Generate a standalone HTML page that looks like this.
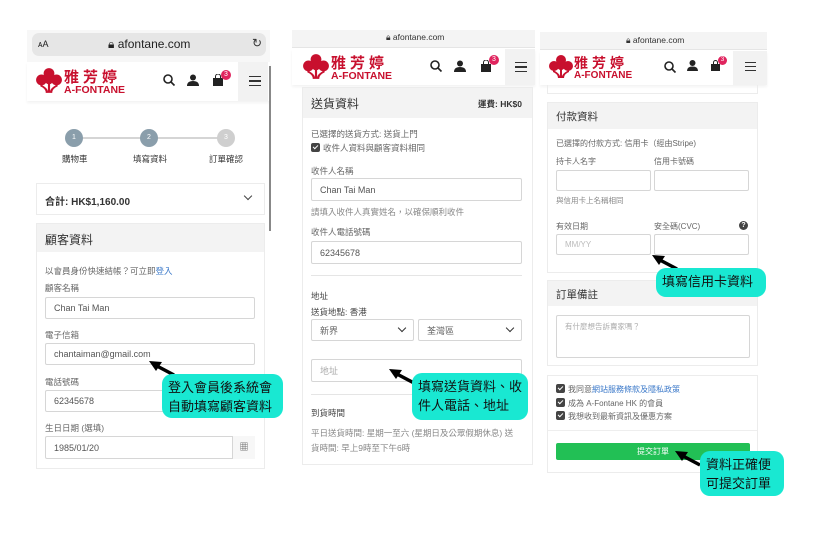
<!DOCTYPE html>
<html><head><meta charset="utf-8"><style>
*{margin:0;padding:0;box-sizing:border-box}
body{width:822px;height:554px;background:#fff;position:relative;overflow:hidden;font-family:"Liberation Sans","Noto Sans CJK TC",sans-serif;color:#555}
.a{position:absolute;white-space:nowrap}
.inp{position:absolute;border:1px solid #d6d6d6;background:#fff;border-radius:2px;font-size:9px;color:#555;padding-left:8px;display:flex;align-items:center}
.lbl{position:absolute;font-size:8.5px;color:#666;white-space:nowrap}
.gh{position:absolute;background:#f3f3f3}
.card{position:absolute;border:1px solid #ececec;background:#fff}
.call{position:absolute;background:#19e8d2;border-radius:10px;color:#111;font-size:13px;line-height:19px;padding:4px 6px;white-space:nowrap}
.cb{display:inline-block;width:9px;height:9px;background:#444;border-radius:2px;vertical-align:-1px;margin-right:3px;position:relative}
.cb:after{content:"";position:absolute;left:3px;top:1px;width:2px;height:4px;border:solid #fff;border-width:0 1px 1px 0;transform:rotate(45deg)}
</style></head><body>

<svg width="0" height="0" style="position:absolute"><defs>
<g id="flower" fill="#c8102e"><circle cx="12" cy="6" r="5"/><circle cx="5" cy="12" r="5"/><circle cx="19" cy="12" r="5"/><circle cx="12" cy="12" r="4"/><path d="M11 14h2v10h-2z"/><path d="M4 16 Q12 20 11 24 L9 24 Q9 20 4 18Z"/><path d="M20 16 Q12 20 13 24 L15 24 Q15 20 20 18Z"/></g>
<g id="srch" fill="none" stroke="#222" stroke-width="1.6"><circle cx="5" cy="5" r="4"/><path d="M8 8 L11.5 11.5"/></g>
<g id="arr"><path d="M29 19 L11 9.5" stroke="#000" stroke-width="3.5"/><path d="M4 5 L17 6 L11 15Z" fill="#000"/></g>
</defs></svg>

<!-- ========== PANEL 1 ========== -->
<div class="a" style="left:27px;top:30px;width:243px;height:32px;background:#f7f7f7"></div>
<div class="a" style="left:32px;top:33px;width:234px;height:23px;background:#e6e6e6;border-radius:7px"></div>
<div class="a" style="left:38px;top:39px;font-size:9px;color:#222">ᴀA</div>
<div class="a" style="left:108px;top:37px;font-size:12px;color:#222">&#128274;&#xFE0E; afontane.com</div>
<div class="a" style="left:252px;top:36px;font-size:12px;color:#333">↻</div>
<div class="a" style="left:27px;top:62px;width:243px;height:39px;background:#fff;box-shadow:0 2px 3px rgba(0,0,0,.05)"></div>
<div class="a" style="left:238px;top:62px;width:30px;height:39px;background:#f2f2f2"></div>
<svg class="a" style="left:36px;top:67px" width="26" height="28" viewBox="0 0 24 26"><use href="#flower"/></svg>
<div class="a" style="left:64px;top:66px;font-size:15px;font-weight:bold;color:#c8102e;letter-spacing:4px">雅芳婷</div>
<div class="a" style="left:64px;top:84px;font-size:10.5px;font-weight:bold;color:#c8102e">A-FONTANE</div>
<svg class="a" style="left:163px;top:74px" width="13" height="13"><use href="#srch"/></svg>
<svg class="a" style="left:187px;top:74px" width="12" height="12"><circle cx="6" cy="3.5" r="3" fill="#222"/><path d="M0 12 Q0 7 6 7 Q12 7 12 12Z" fill="#222"/></svg>
<svg class="a" style="left:212px;top:74px" width="12" height="12"><path d="M1 4h10v8H1z" fill="#222"/><path d="M3.5 4V2.5a2.5 2.5 0 0 1 5 0V4" stroke="#222" fill="none"/></svg>
<div class="a" style="left:221px;top:70px;width:10px;height:10px;border-radius:50%;background:#e0245e;color:#fff;font-size:7px;text-align:center;line-height:10px">3</div>
<div class="a" style="left:249px;top:76px;width:12px;height:10px;border-top:1.5px solid #333;border-bottom:1.5px solid #333"></div>
<div class="a" style="left:249px;top:80px;width:12px;height:1.5px;background:#333"></div>
<div class="a" style="left:269px;top:66px;width:2px;height:165px;background:#888"></div>
<div class="a" style="left:74px;top:137px;width:152px;height:2px;background:#d5d5d5"></div>
<div class="a" style="left:65px;top:129px;width:18px;height:18px;border-radius:50%;background:#8a9eab;color:#fff;font-size:7px;text-align:center;line-height:18px">1</div>
<div class="a" style="left:140px;top:129px;width:18px;height:18px;border-radius:50%;background:#8a9eab;color:#fff;font-size:7px;text-align:center;line-height:18px">2</div>
<div class="a" style="left:217px;top:129px;width:18px;height:18px;border-radius:50%;background:#cfcfcf;color:#fff;font-size:7px;text-align:center;line-height:18px">3</div>
<div class="a" style="left:62px;top:153px;font-size:8.5px;color:#333">購物車</div>
<div class="a" style="left:133px;top:153px;font-size:8.5px;color:#333">填寫資料</div>
<div class="a" style="left:209px;top:153px;font-size:8.5px;color:#333">訂單確認</div>
<div class="card" style="left:36px;top:183px;width:229px;height:32px"></div>
<div class="a" style="left:45px;top:193px;font-size:10px;font-weight:bold;color:#333">合計: HK$1,160.00</div>
<div class="a" style="left:245px;top:193px;width:6px;height:6px;border-right:1.3px solid #444;border-bottom:1.3px solid #444;transform:rotate(45deg)"></div>
<div class="card" style="left:36px;top:223px;width:229px;height:246px"></div>
<div class="gh" style="left:37px;top:224px;width:227px;height:28px"></div>
<div class="a" style="left:45px;top:231px;font-size:12px;color:#333">顧客資料</div>
<div class="lbl" style="left:45px;top:265px">以會員身份快速結帳？可立即<span style="color:#3a78c9">登入</span></div>
<div class="lbl" style="left:45px;top:282px">顧客名稱</div>
<div class="inp" style="left:45px;top:297px;width:210px;height:22px">Chan Tai Man</div>
<div class="lbl" style="left:45px;top:329px">電子信箱</div>
<div class="inp" style="left:45px;top:343px;width:210px;height:22px">chantaiman@gmail.com</div>
<div class="lbl" style="left:45px;top:376px">電話號碼</div>
<div class="inp" style="left:45px;top:390px;width:210px;height:22px">62345678</div>
<div class="lbl" style="left:45px;top:422px">生日日期 (選填)</div>
<div class="inp" style="left:45px;top:436px;width:210px;height:23px">1985/01/20</div>
<div class="a" style="left:232px;top:436px;width:23px;height:23px;border-left:1px solid #d6d6d6;background:#f7f7f7;font-size:9px;text-align:center;line-height:23px;color:#555">&#9638;</div>
<svg class="a" style="left:145px;top:356px" width="32" height="22"><use href="#arr"/></svg>
<div class="call" style="left:162px;top:374px;width:121px;height:44px">登入會員後系統會<br>自動填寫顧客資料</div>

<!-- ========== PANEL 2 ========== -->
<div class="a" style="left:292px;top:30px;width:243px;height:18px;background:#f4f4f4;border-bottom:1px solid #e5e5e5"></div>
<div class="a" style="left:386px;top:32px;font-size:8.5px;color:#333">&#128274;&#xFE0E; afontane.com</div>
<div class="a" style="left:292px;top:49px;width:243px;height:36px;background:#fff;box-shadow:0 2px 3px rgba(0,0,0,.05)"></div>
<div class="a" style="left:505px;top:49px;width:30px;height:36px;background:#f2f2f2"></div>
<svg class="a" style="left:303px;top:53px" width="26" height="28" viewBox="0 0 24 26"><use href="#flower"/></svg>
<div class="a" style="left:331px;top:52px;font-size:15px;font-weight:bold;color:#c8102e;letter-spacing:4px">雅芳婷</div>
<div class="a" style="left:331px;top:70px;font-size:10.5px;font-weight:bold;color:#c8102e">A-FONTANE</div>
<svg class="a" style="left:430px;top:60px" width="13" height="13"><use href="#srch"/></svg>
<svg class="a" style="left:454px;top:60px" width="12" height="12"><circle cx="6" cy="3.5" r="3" fill="#222"/><path d="M0 12 Q0 7 6 7 Q12 7 12 12Z" fill="#222"/></svg>
<svg class="a" style="left:480px;top:60px" width="12" height="12"><path d="M1 4h10v8H1z" fill="#222"/><path d="M3.5 4V2.5a2.5 2.5 0 0 1 5 0V4" stroke="#222" fill="none"/></svg>
<div class="a" style="left:489px;top:55px;width:10px;height:10px;border-radius:50%;background:#e0245e;color:#fff;font-size:7px;text-align:center;line-height:10px">3</div>
<div class="a" style="left:515px;top:62px;width:12px;height:10px;border-top:1.5px solid #333;border-bottom:1.5px solid #333"></div>
<div class="a" style="left:515px;top:66px;width:12px;height:1.5px;background:#333"></div>
<div class="card" style="left:302px;top:87px;width:231px;height:378px"></div>
<div class="gh" style="left:303px;top:88px;width:229px;height:30px"></div>
<div class="a" style="left:311px;top:95px;font-size:12px;color:#333">送貨資料</div>
<div class="a" style="left:478px;top:98px;font-size:8.5px;font-weight:bold;color:#333">運費: HK$0</div>
<div class="lbl" style="left:311px;top:128px">已選擇的送貨方式: 送貨上門</div>
<div class="lbl" style="left:311px;top:142px"><span class="cb"></span>收件人資料與顧客資料相同</div>
<div class="lbl" style="left:311px;top:165px">收件人名稱</div>
<div class="inp" style="left:311px;top:178px;width:211px;height:23px">Chan Tai Man</div>
<div class="lbl" style="left:311px;top:206px;color:#888">請填入收件人真實姓名，以確保順利收件</div>
<div class="lbl" style="left:311px;top:226px">收件人電話號碼</div>
<div class="inp" style="left:311px;top:241px;width:211px;height:23px">62345678</div>
<div class="a" style="left:311px;top:275px;width:211px;height:1px;background:#e5e5e5"></div>
<div class="lbl" style="left:311px;top:290px;color:#444">地址</div>
<div class="lbl" style="left:311px;top:306px;color:#444">送貨地點: 香港</div>
<div class="inp" style="left:311px;top:319px;width:103px;height:22px;color:#666">新界</div>
<div class="a" style="left:399px;top:325px;width:6px;height:6px;border-right:1.5px solid #333;border-bottom:1.5px solid #333;transform:rotate(45deg)"></div>
<div class="inp" style="left:418px;top:319px;width:104px;height:22px;color:#666">荃灣區</div>
<div class="a" style="left:507px;top:325px;width:6px;height:6px;border-right:1.5px solid #333;border-bottom:1.5px solid #333;transform:rotate(45deg)"></div>
<div class="inp" style="left:311px;top:359px;width:211px;height:23px;color:#aaa">地址</div>
<div class="a" style="left:311px;top:394px;width:211px;height:1px;background:#e5e5e5"></div>
<div class="lbl" style="left:311px;top:407px;color:#444">到貨時間</div>
<div class="lbl" style="left:311px;top:427px;color:#888">平日送貨時間: 星期一至六 (星期日及公眾假期休息) 送</div>
<div class="lbl" style="left:311px;top:442px;color:#888">貨時間: 早上9時至下午6時</div>
<svg class="a" style="left:385px;top:364px" width="32" height="22"><use href="#arr"/></svg>
<div class="call" style="left:412px;top:373px;width:116px;height:47px">填寫送貨資料、收<br>件人電話、地址</div>

<!-- ========== PANEL 3 ========== -->
<div class="a" style="left:540px;top:32px;width:227px;height:18px;background:#f4f4f4;border-bottom:1px solid #e5e5e5"></div>
<div class="a" style="left:626px;top:35px;font-size:8.5px;color:#333">&#128274;&#xFE0E; afontane.com</div>
<div class="a" style="left:540px;top:51px;width:227px;height:34px;background:#fff;box-shadow:0 2px 3px rgba(0,0,0,.05)"></div>
<div class="a" style="left:733px;top:51px;width:34px;height:34px;background:#f2f2f2"></div>
<svg class="a" style="left:549px;top:54px" width="24" height="26" viewBox="0 0 24 26"><use href="#flower"/></svg>
<div class="a" style="left:574px;top:53px;font-size:14px;font-weight:bold;color:#c8102e;letter-spacing:4px">雅芳婷</div>
<div class="a" style="left:574px;top:70px;font-size:10px;font-weight:bold;color:#c8102e">A-FONTANE</div>
<svg class="a" style="left:664px;top:61px" width="13" height="13"><use href="#srch"/></svg>
<svg class="a" style="left:687px;top:60px" width="11" height="11"><circle cx="5.5" cy="3" r="3" fill="#222"/><path d="M0 11 Q0 6.5 5.5 6.5 Q11 6.5 11 11Z" fill="#222"/></svg>
<svg class="a" style="left:710px;top:60px" width="11" height="11"><path d="M1 4h9v7H1z" fill="#222"/><path d="M3.5 4V2.5a2 2 0 0 1 4 0V4" stroke="#222" fill="none"/></svg>
<div class="a" style="left:718px;top:56px;width:9px;height:9px;border-radius:50%;background:#e0245e;color:#fff;font-size:6px;text-align:center;line-height:9px">3</div>
<div class="a" style="left:745px;top:62px;width:11px;height:9px;border-top:1.3px solid #333;border-bottom:1.3px solid #333"></div>
<div class="a" style="left:745px;top:66px;width:11px;height:1.3px;background:#333"></div>
<div class="a" style="left:547px;top:85px;width:211px;height:9px;border:1px solid #ececec;border-top:none"></div>
<div class="card" style="left:547px;top:102px;width:211px;height:171px"></div>
<div class="gh" style="left:548px;top:103px;width:209px;height:26px"></div>
<div class="a" style="left:556px;top:109px;font-size:10.5px;color:#333">付款資料</div>
<div class="lbl" style="left:556px;top:138px;font-size:8px">已選擇的付款方式: 信用卡（經由Stripe)</div>
<div class="lbl" style="left:556px;top:156px;font-size:8px">持卡人名字</div>
<div class="lbl" style="left:654px;top:156px;font-size:8px">信用卡號碼</div>
<div class="inp" style="left:556px;top:170px;width:95px;height:21px"></div>
<div class="inp" style="left:654px;top:170px;width:95px;height:21px"></div>
<div class="lbl" style="left:556px;top:195px;font-size:7.5px;color:#888">與信用卡上名稱相同</div>
<div class="lbl" style="left:556px;top:221px;font-size:8px">有效日期</div>
<div class="lbl" style="left:654px;top:221px;font-size:8px">安全碼(CVC)</div>
<div class="a" style="left:739px;top:221px;width:9px;height:9px;border-radius:50%;background:#444;color:#fff;font-size:7px;text-align:center;line-height:9px;font-weight:bold">?</div>
<div class="inp" style="left:556px;top:234px;width:95px;height:21px;color:#bbb;font-size:8px">MM/YY</div>
<div class="inp" style="left:654px;top:234px;width:95px;height:21px"></div>
<div class="card" style="left:547px;top:280px;width:211px;height:86px"></div>
<div class="gh" style="left:548px;top:281px;width:209px;height:25px"></div>
<div class="a" style="left:556px;top:287px;font-size:10.5px;color:#333">訂單備註</div>
<div class="inp" style="left:556px;top:315px;width:194px;height:43px;align-items:flex-start;padding-top:5px;font-size:7.5px;color:#aaa">有什麼想告訴賣家嗎？</div>
<div class="card" style="left:547px;top:375px;width:211px;height:98px"></div>
<div class="lbl" style="left:556px;top:384px;font-size:8px"><span class="cb"></span>我同意<span style="color:#3a78c9">網站服務條款及隱私政策</span></div>
<div class="lbl" style="left:556px;top:398px;font-size:8px"><span class="cb"></span>成為 A-Fontane HK 的會員</div>
<div class="lbl" style="left:556px;top:411px;font-size:8px"><span class="cb"></span>我想收到最新資訊及優惠方案</div>
<div class="a" style="left:548px;top:430px;width:209px;height:1px;background:#eee"></div>
<div class="a" style="left:556px;top:443px;width:194px;height:17px;background:#22c055;border-radius:2px;color:#fff;font-size:8px;text-align:center;line-height:17px">提交訂單</div>
<svg class="a" style="left:671px;top:446px" width="32" height="22"><use href="#arr"/></svg>
<div class="call" style="left:700px;top:451px;width:84px;height:45px">資料正確便<br>可提交訂單</div>
<svg class="a" style="left:648px;top:250px" width="32" height="22"><use href="#arr"/></svg>
<div class="call" style="left:656px;top:268px;width:110px;height:29px;line-height:20px;padding-top:4px">填寫信用卡資料</div>
</body></html>
